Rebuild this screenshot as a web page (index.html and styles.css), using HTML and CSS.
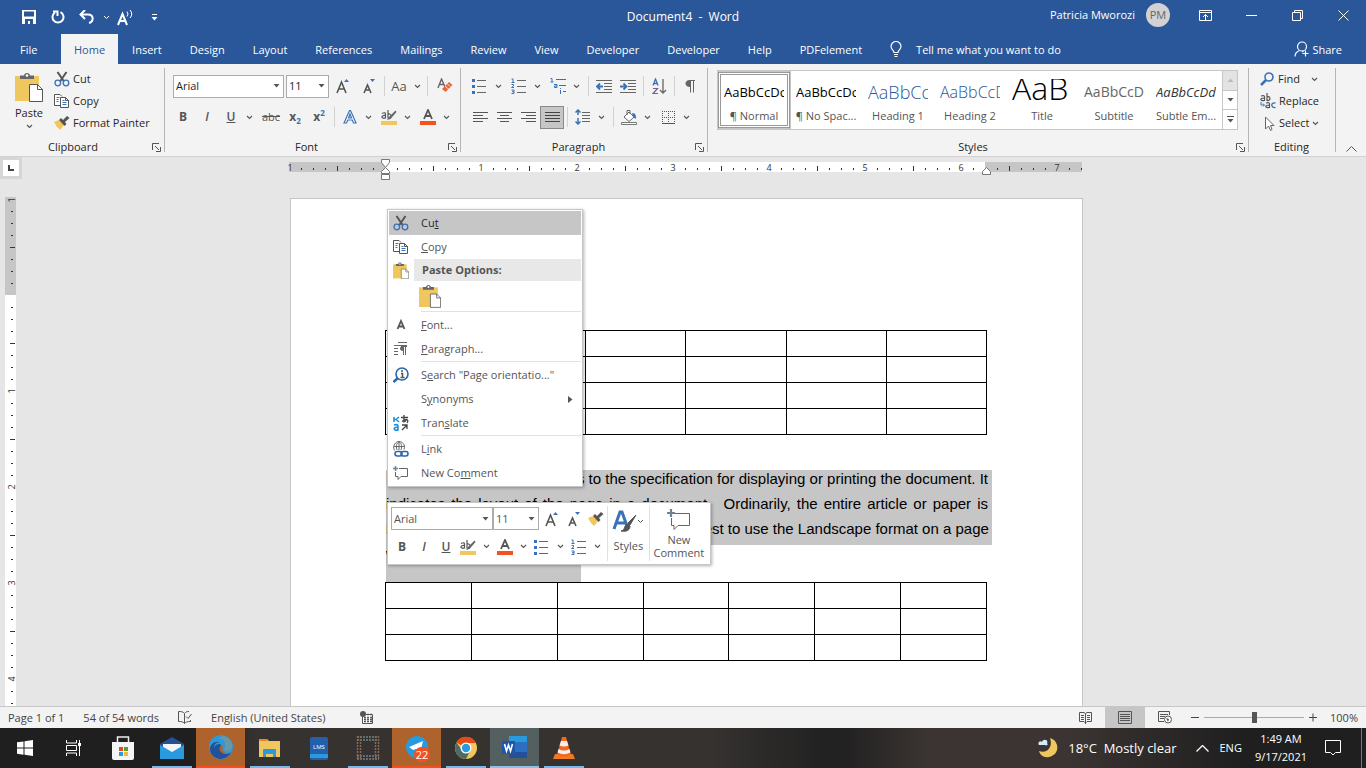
FILE: index.html
```
<!DOCTYPE html>
<html lang="en">
<head>
    <meta charset="UTF-8">
    <title>Document4 - Word</title>
    <link rel="stylesheet" href="styles.css">
</head>
<body>
    <!-- Shared icons -->
    <svg class="sprite" aria-hidden="true">
        <symbol id="caret" viewBox="0 0 7 5"><path d="M1 1l2.5 2.5L6 1" fill="none" stroke="#555" stroke-width="1.1"/></symbol>
        <symbol id="tri" viewBox="0 0 7 4"><path d="M0.5 0h6L3.5 3.5z" fill="#555"/></symbol>
        <symbol id="launcher" viewBox="0 0 9 9"><path d="M0.5 7V0.500H7M3 3l4 4M8.500 4v4.500H4" fill="none" stroke="#555"/></symbol>
        <symbol id="cut" viewBox="0 0 16 16"><path d="M3.500 1L10 10.500M12.500 1L6 10.500" stroke="#555" stroke-width="2" fill="none"/><circle cx="3.800" cy="12" r="2.800" fill="none" stroke="#3a72b8" stroke-width="1.300"/><circle cx="12" cy="12" r="2.800" fill="none" stroke="#3a72b8" stroke-width="1.300"/></symbol>
        <symbol id="copy" viewBox="0 0 16 16"><path d="M7 12.500H0.500v-11h5.500l2 2" fill="#fff" stroke="#555"/><path d="M6.500 4.500h5l3 3v7h-8z" fill="#fff" stroke="#555"/><path d="M11.500 4.500v3h3" fill="none" stroke="#555"/><path d="M2.500 4.500h3M2.500 6.500h2M2.500 8.500h2M8.500 9.500h4M8.500 11.500h4M8.500 7.500h2" stroke="#3a72b8"/></symbol>
        <symbol id="paste" viewBox="0 0 28 30"><path d="M0 4h24v25H0z" fill="#f0c75e"/><path d="M5 7V3.500h4C9 0 15 0 15 3.500h4V7z" fill="#666"/><circle cx="12" cy="3.500" r="1.300" fill="#fff"/><path d="M14.500 12.500h8l5 5v12h-13z" fill="#fff" stroke="#555"/><path d="M22.500 12.500v5h5" fill="none" stroke="#555"/></symbol>
        <symbol id="brush" viewBox="0 0 16 14"><path d="M0 6l5-2 5 5-4 5-3-3z" fill="#f0c75e"/><path d="M5 4l2-2 2 2 4-4 2.500 2L11 6l1.500 2-2 2z" fill="#555"/></symbol>
        <symbol id="growA" viewBox="0 0 16 16"><path d="M2 15L6.500 4L11 15M3.500 11h6" fill="none" stroke="#555" stroke-width="1.600"/><path d="M9 4l2.500-3L14 4z" fill="#3a72b8"/></symbol>
        <symbol id="shrinkA" viewBox="0 0 16 16"><path d="M3 15L6.500 7L10 15M4.500 12h4" fill="none" stroke="#555" stroke-width="1.600"/><path d="M9 1l2.500 3L14 1z" fill="#3a72b8"/></symbol>
        <symbol id="highlight" viewBox="0 0 16 16"><path d="M0 12h16v4H0z" fill="#f0c75e"/><path d="M1 4.500c3-1.500 3.500-.5 3.500 1V9c-5 1-4.500-3 0-2.500M7 1v8c4 1 4-5 0-4" fill="none" stroke="#555" stroke-width="1.200"/><path d="M14.500 1.500L8 8l-2 3 3.500-1 6-7z" fill="#666"/></symbol>
        <symbol id="fontColor" viewBox="0 0 16 16"><path d="M0 12h16v4H0z" fill="#f4511e"/><path d="M4 10L8 1l4 9M5.500 7h5" fill="none" stroke="#555" stroke-width="1.800"/></symbol>
        <symbol id="bullets" viewBox="0 0 16 16"><path d="M5 2.500h9M5 8.500h9M5 14.500h9" stroke="#666"/><path d="M0 1h3v3H0zM0 7h3v3H0zM0 13h3v3H0z" fill="#3a72b8"/></symbol>
        <symbol id="numbers" viewBox="0 0 16 16"><path d="M6 2.500h9M6 8.500h9M6 14.500h9" stroke="#666"/><path d="M0.500 1H2v3.500M0.500 4.500h3M0.500 6.500h2v1.500l-2 1.500h2.500M0.500 12h2.500v3.500H.5M1 13.700h2" fill="none" stroke="#3a72b8"/></symbol>
        <symbol id="comment" viewBox="0 0 24 22"><path d="M8 4.500h14.500v12H11l-4 4v-4H4.500V9" fill="none" stroke="#666"/><path d="M4 0v8M0 4h8" stroke="#6d8294" stroke-width="2.200"/></symbol>
    </svg>

    <header class="titlebar">
        <div class="quick-access">
            <button class="qa" aria-label="Save"><svg width="14" height="14"><path d="M0 0h14v14H0z" fill="#fff"/><path d="M2 1.500h10v5H2zM3 9h8v5H3z" fill="#2a579a"/><path d="M6 11h2v3H6z" fill="#fff"/></svg></button>
            <button class="qa" aria-label="Repeat"><svg width="14" height="14"><path d="M9.500 2.200A5.500 5.500 0 1 1 4 2.500M2 1.500h4.500V6" fill="none" stroke="#fff" stroke-width="2"/></svg></button>
            <button class="qa" aria-label="Undo"><svg width="16" height="14"><path d="M6 0L1.500 4.500 6 9M2 4.500h7c6 0 6 7 1 8.500" fill="none" stroke="#fff" stroke-width="2"/></svg></button>
            <button class="qa narrow" aria-label="Undo list"><svg width="7" height="5"><path d="M1 1l2.500 2.500L6 1" fill="none" stroke="#fff"/></svg></button>
            <button class="qa" aria-label="Read aloud"><svg width="17" height="17"><path d="M1 16L5.500 5 10 16M3 12h5" fill="none" stroke="#fff" stroke-width="2"/><path d="M10 2.500q2 2.500 0 5M13 1q3.500 4 0 8" fill="none" stroke="#fff"/></svg></button>
            <button class="qa" aria-label="Customize"><svg width="7" height="7"><path d="M1 .5h5" stroke="#fff"/><path d="M0.500 3h6l-3 3.500z" fill="#fff"/></svg></button>
        </div>
        <h1 class="doc-title">Document4 &nbsp;-&nbsp; Word</h1>
        <div class="window-controls">
            <span class="user">Patricia Mworozi</span>
            <span class="avatar">PM</span>
            <button class="win" aria-label="Ribbon display options"><svg width="13" height="11"><path d="M.5.5h12v10H.5zM.5 2.500h12M6.500 10V4.500M4 7l2.500-2.500L9 7" fill="none" stroke="#fff"/></svg></button>
            <button class="win" aria-label="Minimize"><svg width="11" height="11"><path d="M0 5.500h11" stroke="#fff"/></svg></button>
            <button class="win" aria-label="Restore"><svg width="11" height="11"><path d="M.5 2.500h8v8h-8zM2.500 2.500v-2h8v8h-2" fill="none" stroke="#fff"/></svg></button>
            <button class="win" aria-label="Close"><svg width="11" height="11"><path d="M.5.5l10 10M10.500.5l-10 10" stroke="#fff"/></svg></button>
        </div>
    </header>

    <nav class="tabs">
        <a href="#" class="tab file">File</a>
        <a href="#" class="tab active">Home</a>
        <a href="#" class="tab">Insert</a>
        <a href="#" class="tab">Design</a>
        <a href="#" class="tab">Layout</a>
        <a href="#" class="tab">References</a>
        <a href="#" class="tab">Mailings</a>
        <a href="#" class="tab">Review</a>
        <a href="#" class="tab">View</a>
        <a href="#" class="tab">Developer</a>
        <a href="#" class="tab">Developer</a>
        <a href="#" class="tab">Help</a>
        <a href="#" class="tab">PDFelement</a>
        <button class="tell-me"><svg width="12" height="17"><path d="M4 11.500C4 9 1 8.500 1 5.500a5 5 0 0 1 10 0C11 8.500 8 9 8 11.500zM4 13.500h4M4.500 15.500h3" fill="none" stroke="#fff" stroke-width="1.200"/></svg>Tell me what you want to do</button>
        <button class="share"><svg width="16" height="16"><circle cx="8" cy="5.500" r="4.500" fill="none" stroke="#fff" stroke-width="1.200"/><path d="M1 15.500c0-3.500 2-5 4.500-6M8 11l1.500-1M11.500 9.500v6M8.500 12.500h6" fill="none" stroke="#fff" stroke-width="1.200"/></svg>Share</button>
    </nav>

    <section class="ribbon">
        <div class="group clipboard">
            <div class="clip-body">
                <button class="paste-btn"><svg width="28" height="30"><use href="#paste"/></svg>Paste<svg class="caret"><use href="#caret"/></svg></button>
                <div class="stack">
                    <button class="cmd"><svg width="16" height="16"><use href="#cut"/></svg>Cut</button>
                    <button class="cmd"><svg width="16" height="16"><use href="#copy"/></svg>Copy</button>
                    <button class="cmd"><svg width="16" height="14"><use href="#brush"/></svg>Format Painter</button>
                </div>
            </div>
            <div class="group-name">Clipboard<svg class="launcher"><use href="#launcher"/></svg></div>
        </div>

        <div class="group font">
            <div class="rows">
                <div class="row">
                    <span class="combo face"><select aria-label="Font"><option>Arial</option></select><svg width="7" height="4"><use href="#tri"/></svg></span>
                    <span class="combo size"><select aria-label="Font size"><option>11</option></select><svg width="7" height="4"><use href="#tri"/></svg></span>
                    <button class="tool wide" aria-label="Increase font size"><svg width="16" height="16"><use href="#growA"/></svg></button>
                    <button class="tool" aria-label="Decrease font size"><svg width="16" height="16"><use href="#shrinkA"/></svg></button>
                    <i class="sep"></i>
                    <button class="tool case">Aa<svg class="caret"><use href="#caret"/></svg></button>
                    <i class="sep"></i>
                    <button class="tool wide" aria-label="Clear formatting"><svg width="16" height="16"><path d="M1 10L4.500 1 8 9M2.500 6.500h4" fill="none" stroke="#666" stroke-width="1.400"/><path d="M5 11l7-7 3.500 3-7 7z" fill="#e8663c"/><path d="M8 8l4 3.500M10 5.500l3 3" stroke="#fff" stroke-width=".8"/></svg></button>
                </div>
                <div class="row">
                    <button class="tool"><b>B</b></button>
                    <button class="tool"><em>I</em></button>
                    <button class="tool"><u>U</u></button>
                    <button class="arrow mid" aria-label="Underline style"><svg class="caret"><use href="#caret"/></svg></button>
                    <button class="tool strike">abc</button>
                    <button class="tool script">x<sub>2</sub></button>
                    <button class="tool script">x<sup>2</sup></button>
                    <i class="sep"></i>
                    <button class="tool" aria-label="Text effects"><svg width="16" height="16"><path d="M2 14L7.500 1.500h1L14 14h-2.500l-1.200-3H5.700l-1.200 3zM6.500 9h3L8 5z" fill="#fff" stroke="#3a72b8" stroke-width="1.200"/></svg></button>
                    <button class="arrow" aria-label="Text effects list"><svg class="caret"><use href="#caret"/></svg></button>
                    <button class="tool" aria-label="Highlight"><svg width="16" height="16"><use href="#highlight"/></svg></button>
                    <button class="arrow" aria-label="Highlight colors"><svg class="caret"><use href="#caret"/></svg></button>
                    <button class="tool" aria-label="Font color"><svg width="16" height="16"><use href="#fontColor"/></svg></button>
                    <button class="arrow" aria-label="Font colors"><svg class="caret"><use href="#caret"/></svg></button>
                </div>
            </div>
            <div class="group-name">Font<svg class="launcher"><use href="#launcher"/></svg></div>
        </div>

        <div class="group paragraph">
            <div class="rows">
                <div class="row">
                    <button class="tool" aria-label="Bullets"><svg width="16" height="16"><use href="#bullets"/></svg></button>
                    <button class="arrow" aria-label="Bullet library"><svg class="caret"><use href="#caret"/></svg></button>
                    <button class="tool" aria-label="Numbering"><svg width="16" height="16"><use href="#numbers"/></svg></button>
                    <button class="arrow" aria-label="Numbering library"><svg class="caret"><use href="#caret"/></svg></button>
                    <button class="tool" aria-label="Multilevel list"><svg width="16" height="16"><path d="M6 1.500h10M9 7.500h7M13 13.500h3" stroke="#666"/><path d="M0.500 0.500H2v3.500M0.500 4h3M4 6.500h3v3H4.500V8H7M10.500 12v4M10.500 10v1" fill="none" stroke="#3a72b8"/></svg></button>
                    <button class="arrow" aria-label="List styles"><svg class="caret"><use href="#caret"/></svg></button>
                    <i class="sep"></i>
                    <button class="tool" aria-label="Decrease indent"><svg width="16" height="14"><path d="M0 1.500h16M8 4.500h8M8 7.500h8M8 10.500h8M0 13.500h16" stroke="#666"/><path d="M7 7.500H1M4 4.500l-3 3 3 3" fill="none" stroke="#3a72b8" stroke-width="1.800"/></svg></button>
                    <button class="tool" aria-label="Increase indent"><svg width="16" height="14"><path d="M0 1.500h16M8 4.500h8M8 7.500h8M8 10.500h8M0 13.500h16" stroke="#666"/><path d="M0 7.500h6M3.500 4.500l3 3-3 3" fill="none" stroke="#3a72b8" stroke-width="1.800"/></svg></button>
                    <i class="sep"></i>
                    <button class="tool" aria-label="Sort"><svg width="15" height="17"><path d="M1 7.500L3.500 1 6 7.500M2 5.500h3" fill="none" stroke="#3a72b8" stroke-width="1.300"/><path d="M1 10.500h4.500l-4.500 5h5" fill="none" stroke="#7a5f8a" stroke-width="1.200"/><path d="M11 1v14M8 12l3 3 3-3" fill="none" stroke="#666" stroke-width="1.300"/></svg></button>
                    <i class="sep"></i>
                    <button class="tool" aria-label="Show marks"><svg width="10" height="13"><path d="M5 0v7C-1 7-1 0 5 0z" fill="#666"/><path d="M4 .5h6M5.500 0v12.500M8.500 0v12.500" stroke="#666"/></svg></button>
                </div>
                <div class="row">
                    <button class="tool" aria-label="Align left"><svg width="15" height="12"><path d="M0 1.500h15M0 4.500h10M0 7.500h15M0 10.500h10" stroke="#555"/></svg></button>
                    <button class="tool" aria-label="Center"><svg width="15" height="12"><path d="M0 1.500h15M3 4.500h9M0 7.500h15M3 10.500h9" stroke="#555"/></svg></button>
                    <button class="tool" aria-label="Align right"><svg width="15" height="12"><path d="M0 1.500h15M5 4.500h10M0 7.500h15M5 10.500h10" stroke="#555"/></svg></button>
                    <button class="tool pressed" aria-label="Justify"><svg width="15" height="12"><path d="M0 1.500h15M0 4.500h15M0 7.500h15M0 10.500h15" stroke="#444"/></svg></button>
                    <i class="sep"></i>
                    <button class="tool" aria-label="Line spacing"><svg width="16" height="16"><path d="M7 3.500h8M7 6.500h8M7 9.500h8M7 12.500h8" stroke="#666"/><path d="M3 1v5M.5 3.500L3 1l2.500 2.500M3 9v6M.5 12.500L3 15l2.500-2.500" fill="none" stroke="#3a72b8" stroke-width="1.500"/></svg></button>
                    <button class="arrow" aria-label="Spacing options"><svg class="caret"><use href="#caret"/></svg></button>
                    <i class="sep"></i>
                    <button class="tool" aria-label="Shading"><svg width="17" height="16"><path d="M3 8l5-5 5 5-5 4.500zM6 6V1.500h3V5" fill="#fff" stroke="#666"/><path d="M11 4c4 0 4 3 4 6l-3-2z" fill="#3a72b8"/><path d="M.5 13.500h15v2H.5z" fill="#fff" stroke="#777"/></svg></button>
                    <button class="arrow" aria-label="Shading colors"><svg class="caret"><use href="#caret"/></svg></button>
                    <button class="tool" aria-label="Borders"><svg width="13" height="13"><path d="M.5 0v13M6.500 0v13M12.500 0v13M0 .5h13M0 6.500h13" stroke="#555" stroke-dasharray="1 1"/><path d="M0 12.500h13" stroke="#555"/></svg></button>
                    <button class="arrow" aria-label="Border styles"><svg class="caret"><use href="#caret"/></svg></button>
                </div>
            </div>
            <div class="group-name">Paragraph<svg class="launcher"><use href="#launcher"/></svg></div>
        </div>

        <div class="group styles">
            <div class="gallery">
                <button class="style selected"><span class="sample">AaBbCcDc</span>¶ Normal</button>
                <button class="style"><span class="sample">AaBbCcDc</span>¶ No Spac...</button>
                <button class="style"><span class="sample h1">AaBbCc</span>Heading 1</button>
                <button class="style"><span class="sample h2">AaBbCcD</span>Heading 2</button>
                <button class="style"><span class="sample title">AaB</span>Title</button>
                <button class="style"><span class="sample subtitle">AaBbCcD</span>Subtitle</button>
                <button class="style"><span class="sample emphasis">AaBbCcDd</span>Subtle Em...</button>
                <div class="scroller">
                    <button class="off" aria-label="Previous row"><svg width="7" height="4"><path d="M.5 4h6L3.500.5z" fill="#bbb"/></svg></button>
                    <button aria-label="Next row"><svg width="7" height="4"><use href="#tri"/></svg></button>
                    <button aria-label="More styles"><svg width="7" height="7"><path d="M0 .5h7" stroke="#555"/><path d="M.5 3h6l-3 3.500z" fill="#555"/></svg></button>
                </div>
            </div>
            <div class="group-name">Styles<svg class="launcher"><use href="#launcher"/></svg></div>
        </div>

        <div class="group editing">
            <div class="stack">
                <button class="cmd"><svg width="15" height="14"><circle cx="9" cy="5" r="4" fill="none" stroke="#3a72b8" stroke-width="1.600"/><path d="M6 8l-5 5" stroke="#3a72b8" stroke-width="2.500"/></svg>Find<svg class="caret far"><use href="#caret"/></svg></button>
                <button class="cmd"><svg width="16" height="16"><path d="M1 3c3-1 3.500 0 3.500 1v3.500C-.5 8-.5 5 4.500 5M7 0v7.500c4 .5 4-4.500 0-4" fill="none" stroke="#555" stroke-width="1.200"/><path d="M1 9v3h3M3 10.500L4.500 12 3 13.500" fill="none" stroke="#3a72b8"/><path d="M6 10c3-1 3.500 0 3.500 1v3.500c-5 .5-5-2.500 0-2.500" fill="none" stroke="#555" stroke-width="1.200"/><path d="M15.500 10c-5-1-5 5 0 4.500" fill="none" stroke="#3a72b8" stroke-width="1.300"/></svg>Replace</button>
                <button class="cmd"><svg width="16" height="15"><path d="M5.500 1v12l3-3 2 4.500 1.500-1-1.500-4H14z" fill="#fff" stroke="#666"/></svg>Select<svg class="caret"><use href="#caret"/></svg></button>
            </div>
            <div class="group-name">Editing</div>
        </div>
        <button class="collapse" aria-label="Collapse the ribbon"><svg width="11" height="6"><path d="M.5 5.500l5-5 5 5" fill="none" stroke="#555"/></svg></button>
    </section>

    <main class="workspace">
        <div class="side">
            <button class="tab-stop" aria-label="Tab selector"><svg width="6" height="6"><path d="M1 0v5h5" fill="none" stroke="#444" stroke-width="2"/></svg></button>
            <svg class="v-ruler" width="11" height="509">
                <defs>
                    <pattern id="vticks" width="11" height="96" y="2" patternUnits="userSpaceOnUse"><path d="M6 12.500h2M6 24.500h2M6 36.500h2M5 48.500h5M6 60.500h2M6 72.500h2M6 84.500h2" stroke="#333"/></pattern>
                </defs>
                <path d="M0 0h11v98H0z" fill="#c6c6c6"/><path d="M0 98h11v411H0z" fill="#fff"/>
                <path d="M0 0h11v509H0z" fill="url(#vticks)"/>
                <g class="ruler-num">
                    <text transform="translate(10 3) rotate(-90)">1</text>
                    <text transform="translate(10 194) rotate(-90)">1</text>
                    <text transform="translate(10 290) rotate(-90)">2</text>
                    <text transform="translate(10 386) rotate(-90)">3</text>
                    <text transform="translate(10 482) rotate(-90)">4</text>
                </g>
            </svg>
        </div>
        <div class="canvas">
            <svg class="h-ruler" width="797" height="24">
                <defs>
                    <pattern id="hticks" width="96" height="12" x="1" y="5" patternUnits="userSpaceOnUse"><path d="M12.500 6v2M24.500 6v2M36.500 6v2M48.500 4v5M60.500 6v2M72.500 6v2M84.500 6v2" stroke="#333"/></pattern>
                </defs>
                <path d="M1 5h96v10H1zM697 5h97v10H697z" fill="#c6c6c6"/><path d="M97 5h600v10H97z" fill="#fff"/>
                <path d="M0 5h794v10H0z" fill="url(#hticks)"/>
                <g class="ruler-num">
                    <text x="2" y="14">1</text><text x="193" y="14">1</text><text x="289" y="14">2</text><text x="385" y="14">3</text>
                    <text x="481" y="14">4</text><text x="577" y="14">5</text><text x="673" y="14">6</text><text x="769" y="14">7</text>
                </g>
                <path d="M93.500 2.500h8v3l-4 5 4 4v2h-8v-2l4-4-4-5zM93.500 17.500h8v5h-8z" fill="#fff" stroke="#777"/>
                <path d="M694.500 17.500v-3l4-4 4 4v3z" fill="#fff" stroke="#777"/>
            </svg>
            <article class="page">
                <table class="grid first">
                    <tr><td></td><td></td><td></td><td></td><td></td><td></td></tr>
                    <tr><td></td><td></td><td></td><td></td><td></td><td></td></tr>
                    <tr><td></td><td></td><td></td><td></td><td></td><td></td></tr>
                    <tr><td></td><td></td><td></td><td></td><td></td><td></td></tr>
                </table>
                <div class="text">
                    <div class="line">Page orientation simply refers to the specification for displaying or printing the document. It</div>
                    <div class="line">indicates the layout of the page in a document.&nbsp; Ordinarily, the entire article or paper is</div>
                    <div class="line">in the Portrait format. However, it might be the best to use the Landscape format on a page</div>
                    <div class="line last">with a wide table.</div>
                </div>
                <table class="grid">
                    <tr><td></td><td></td><td></td><td></td><td></td><td></td><td></td></tr>
                    <tr><td></td><td></td><td></td><td></td><td></td><td></td><td></td></tr>
                    <tr><td></td><td></td><td></td><td></td><td></td><td></td><td></td></tr>
                </table>

                <!-- Right-click menu -->
                <div class="context-menu">
                    <button class="item hover"><svg width="16" height="16"><use href="#cut"/></svg><span>Cu<u>t</u></span></button>
                    <button class="item"><svg width="16" height="16"><use href="#copy"/></svg><span><u>C</u>opy</span></button>
                    <div class="item heading"><svg width="16" height="17"><use href="#paste"/></svg><b>Paste Options:</b></div>
                    <button class="item option" aria-label="Keep source formatting"><svg width="22" height="24"><use href="#paste"/></svg></button>
                    <hr>
                    <button class="item"><svg width="16" height="16"><path d="M4.500 12L8 4l3.500 8M5.500 9.500h5" fill="none" stroke="#555" stroke-width="1.800"/></svg><span><u>F</u>ont...</span></button>
                    <button class="item"><svg width="16" height="16"><path d="M5 1.500h9M1 4.500h13M1 7.500h4M1 10.500h4M1 13.500h4M10.500 5v9M12.500 5v9M8 5.500h6" stroke="#666"/><path d="M10 5v5c-4 0-4-5 0-5z" fill="#666"/></svg><span><u>P</u>aragraph...</span></button>
                    <hr>
                    <button class="item"><svg width="16" height="16"><circle cx="9" cy="7" r="6" fill="none" stroke="#2a66ad" stroke-width="1.600"/><path d="M5 11l-4.500 4" stroke="#2a66ad" stroke-width="2.500"/><path d="M9 3v2M8 6.500h1.500V10M7.500 10.500h4" fill="none" stroke="#555" stroke-width="1.500"/></svg><span>S<u>e</u>arch "Page orientatio..."</span></button>
                    <button class="item"><svg width="16" height="16"></svg><span>S<u>y</u>nonyms</span><svg class="more" width="5" height="7"><path d="M0 0v7l4.500-3.500z" fill="#555"/></svg></button>
                    <button class="item"><svg width="16" height="16"><path d="M1 2v5M1 4.500h2L6 2M3 4.500L6 7M1 10c3-1 4 0 4 1v4c-5 1-5-3 0-3" fill="none" stroke="#1e8fd8" stroke-width="1.600"/><path d="M8 2.500h7M11 0v6M14 4c-3 5-6 2-3 1s5 0 3 3M9 10h5v4M14 10l-5 5" fill="none" stroke="#444" stroke-width="1.300"/></svg><span>Tran<u>s</u>late</span></button>
                    <hr>
                    <button class="item"><svg width="16" height="16"><path d="M1.500 9.500C-1 4 3 .5 6 .5s7 3 5 8M1 5.500h10M6 1v8M4 9C2.500 4 4 2 6 1c2 1 3.500 3 2 8" fill="none" stroke="#666"/><rect x="2" y="10.500" width="7" height="4.500" rx="2.200" fill="none" stroke="#2a66ad" stroke-width="1.600"/><rect x="8" y="10.500" width="7" height="4.500" rx="2.200" fill="none" stroke="#2a66ad" stroke-width="1.600"/></svg><span>L<u>i</u>nk</span></button>
                    <button class="item"><svg width="16" height="15"><path d="M6 2.500h8.500v8H8l-3 3v-3H2.500V6" fill="none" stroke="#666"/><path d="M2.500 0v5M0 2.500h5" stroke="#6d8294" stroke-width="1.500"/></svg><span>New Co<u>m</u>ment</span></button>
                </div>

                <!-- Floating mini toolbar -->
                <div class="mini-toolbar">
                    <div class="mini-rows">
                        <div class="row">
                            <span class="combo face"><select aria-label="Selection font"><option>Arial</option></select><svg width="7" height="4"><use href="#tri"/></svg></span>
                            <span class="combo size"><select aria-label="Selection font size"><option>11</option></select><svg width="7" height="4"><use href="#tri"/></svg></span>
                            <button class="tool" aria-label="Grow font"><svg width="16" height="16"><use href="#growA"/></svg></button>
                            <button class="tool" aria-label="Shrink font"><svg width="16" height="16"><use href="#shrinkA"/></svg></button>
                            <button class="tool" aria-label="Format painter"><svg width="16" height="14"><use href="#brush"/></svg></button>
                        </div>
                        <div class="row">
                            <button class="tool"><b>B</b></button>
                            <button class="tool"><em>I</em></button>
                            <button class="tool"><u>U</u></button>
                            <button class="tool" aria-label="Highlight text"><svg width="16" height="16"><use href="#highlight"/></svg></button>
                            <button class="arrow" aria-label="Highlight list"><svg class="caret"><use href="#caret"/></svg></button>
                            <button class="tool" aria-label="Text color"><svg width="16" height="16"><use href="#fontColor"/></svg></button>
                            <button class="arrow" aria-label="Text color list"><svg class="caret"><use href="#caret"/></svg></button>
                            <button class="tool" aria-label="Bullet list"><svg width="16" height="16"><use href="#bullets"/></svg></button>
                            <button class="arrow" aria-label="Bullet list options"><svg class="caret"><use href="#caret"/></svg></button>
                            <button class="tool" aria-label="Numbered list"><svg width="16" height="16"><use href="#numbers"/></svg></button>
                            <button class="arrow" aria-label="Numbered list options"><svg class="caret"><use href="#caret"/></svg></button>
                        </div>
                    </div>
                    <button class="big"><svg width="32" height="24"><path d="M2 20L8 3h2l5 14M4 14h10" fill="none" stroke="#3a72b8" stroke-width="3"/><path d="M24 6l-8 8 2 2zM16 15c-5 1-2 6-7 7 6 1 9-1 9-5z" fill="#555" stroke="#555"/><path d="M26 11l2.500 2.500L31 11" fill="none" stroke="#555"/></svg>Styles</button>
                    <button class="big new"><svg width="24" height="22"><use href="#comment"/></svg>New<br>Comment</button>
                </div>
            </article>
        </div>
    </main>

    <footer class="statusbar">
        <span>Page 1 of 1</span>
        <span>54 of 54 words</span>
        <svg width="14" height="13"><path d="M6.500 2.500C5 .5 3 .5.5.500v10c2.500 0 4.500 0 6 2V2.500c1-1.500 2-2 4.500-2M6.500 12.500c1-1.500 3-2 6-2V9M8 5.500l2 2L13.500 3" fill="none" stroke="#555"/></svg>
        <span>English (United States)</span>
        <svg class="macro" width="13" height="13"><path d="M2.500 4v8.500h10v-9H6" fill="#fff" stroke="#555"/><path d="M7 3.500h6M4 6.500h8M4 8.500h8M4 10.500h8" stroke="#555" stroke-width="1.300" stroke-dasharray="2 1"/><circle cx="3" cy="3" r="3" fill="#555"/></svg>
        <div class="views">
            <button aria-label="Read mode"><svg width="13" height="12"><path d="M6.500 1.500L5 .5H.5v9H5l1.500 1.500L8 9.500h4.500v-9H8zV12M2 3.500h3M2 5.500h3M2 7.500h3M8 3.500h3M8 5.500h3M8 7.500h3" fill="none" stroke="#555"/></svg></button>
            <button class="on" aria-label="Print layout"><svg width="14" height="13"><path d="M.5.5h13v12H.5zM2 3.500h10M2 5.500h10M2 7.500h10M2 9.500h10" fill="none" stroke="#555"/></svg></button>
            <button aria-label="Web layout"><svg width="14" height="13"><path d="M6 10.500H.5V.5h11V4M2 3.500h8M2 5.500h5M2 7.500h4" fill="none" stroke="#555"/><circle cx="10" cy="8.500" r="3.500" fill="#fff" stroke="#555"/><path d="M8 7l3 1-1 3z" fill="#555"/></svg></button>
        </div>
        <div class="zoom">
            <button aria-label="Zoom out"><svg width="8" height="9"><path d="M0 4.500h8" stroke="#444"/></svg></button>
            <input type="range" min="0" max="100" value="50" aria-label="Zoom">
            <button aria-label="Zoom in"><svg width="8" height="9"><path d="M0 4.500h8M4 .5v8" stroke="#444"/></svg></button>
        </div>
        <span class="percent">100%</span>
    </footer>

    <nav class="taskbar">
        <button class="app" aria-label="Start"><svg width="16" height="16"><path d="M0 2.300L6.500 1.400v6.100H0zM7.500 1.200L16 0v7.500H7.500zM0 8.500h6.500v6.200L0 13.700zM7.500 8.500H16V16l-8.500-1.200z" fill="#fff"/></svg></button>
        <button class="app" aria-label="Task view"><svg width="16" height="16"><path d="M.5 0v3h10V0M.5 5.500h10v5H.5zM.5 16v-3h10v3M13.500 0v16" fill="none" stroke="#fff"/><path d="M12 3h3v3h-3z" fill="#fff"/></svg></button>
        <button class="app" aria-label="Store"><svg width="24" height="24"><path d="M6.500 7V1h11v6" fill="none" stroke="#eee" stroke-width="1.500"/><path d="M1 6h22v16q0 2-2 2H3q-2 0-2-2z" fill="#f5f5f5"/><path d="M8 11h4v4H8z" fill="#e64a19"/><path d="M13 11h4v4h-4z" fill="#5a9e30"/><path d="M8 16h4v4H8z" fill="#2a9ade"/><path d="M13 16h4v4h-4z" fill="#f0b93a"/></svg></button>
        <button class="app open" aria-label="Mail"><svg width="24" height="24"><path d="M0 8L12 1l12 7v5H0z" fill="#24509a"/><path d="M3 8h18v8H3z" fill="#f5f5f5"/><path d="M0 9l12 7 12-7v14H0z" fill="#2a9ade"/></svg></button>
        <button class="app alert" aria-label="Edge"><svg width="24" height="24"><circle cx="12" cy="12" r="12" fill="#2a9ade"/><path d="M14 1c9 1 13 13 5 15-4 0-5-1-3-4C17 7 14 3 9 4z" fill="#6d96a4"/><path d="M3 9c4-4 10-2 9 3-2 5 4 10 10 5-2 5-7 7-11 7C3 23-2 15 3 9z" fill="#24509a"/><path d="M14 10c-3-4-9-3-9 3 1-3 3-4 5-4z" fill="#2a9ade"/><path d="M11 11c-2 6 3 9 9 7-5 1-8-3-6-7z" fill="#ad632b"/></svg></button>
        <button class="app open" aria-label="File Explorer"><svg width="22" height="20"><path d="M0 1h8l2 2h11v16H0z" fill="#f0c75e"/><path d="M0 1h8l1 2H0z" fill="#e8882a"/><path d="M4 12q0-1 1-1h11q1 0 1 1v7h-3v-3H7v3H4z" fill="#2a9ade"/></svg></button>
        <button class="app" aria-label="LMS"><svg width="18" height="23"><rect width="18" height="23" rx="2" fill="#245fae"/><path d="M0 17h18v4H0z" fill="#2a9ade"/><text x="3" y="12" class="lms">LMS</text></svg></button>
        <button class="app open" aria-label="Snip"><svg width="24" height="24"><path d="M1 1h22M1 4h22M1 20h22M1 23h22" stroke="#70818b" stroke-width="1.500" stroke-dasharray="2 1"/><path d="M1.500 0v24M4.500 0v24M19.500 0v24M22.500 0v24" stroke="#8a6a50" stroke-width="1.500" stroke-dasharray="2 1"/></svg></button>
        <button class="app alert" aria-label="Telegram"><svg width="24" height="24"><circle cx="12" cy="12" r="11" fill="#2a9ade"/><path d="M4 12l14-6-3 12-4-4-3 1z" fill="#fff"/></svg><span class="badge">22</span></button>
        <button class="app open" aria-label="Chrome"><svg width="24" height="24"><circle cx="12" cy="12" r="11" fill="#f0c75e"/><path d="M12 12L2.500 6.500A11 11 0 0 1 22 7H12z" fill="#e64a19"/><path d="M2.500 6.500A11 11 0 0 0 12 23l4-8-8-1z" fill="#4c6b62"/><circle cx="12" cy="12" r="5.500" fill="#fff"/><circle cx="12" cy="12" r="4.200" fill="#2a9ade"/></svg></button>
        <button class="app current" aria-label="Word"><svg width="26" height="24"><path d="M7 1h18v22H7z" fill="#2a6fc0"/><path d="M7 1h18v6H7z" fill="#2a9ade"/><path d="M7 17h18v6H7z" fill="#24509a"/><path d="M0 6h13v13H0z" fill="#1f57a8"/><path d="M2.500 9l2 7 2-6 2 6 2-7" fill="none" stroke="#fff" stroke-width="1.600"/></svg></button>
        <button class="app open" aria-label="VLC"><svg width="22" height="24"><path d="M2 18h18l2 5H0z" fill="#f07a1e"/><path d="M9 1h4l5 18q-7 4-14 0z" fill="#f4681e"/><path d="M8 5h6l1.500 4.500q-4.500 2-9 0zM5.500 13q5.500 3 11 0l1 3.500q-6.500 3.500-13 0z" fill="#eee"/></svg></button>

        <div class="tray">
            <svg width="20" height="20"><path d="M12 0c10 3 10 17-1 19-5 1-9-2-10-6 9 3 14-5 11-13z" fill="#f0c75e"/><path d="M1 7c-2-3 2-5 3-3 1-4 7-2 5 1 2 2-1 3-2 2H1z" fill="#d5ecf8"/></svg>
            <span class="weather">18°C &nbsp;Mostly clear</span>
            <button aria-label="Hidden icons"><svg width="13" height="7"><path d="M.5 6.500l6-6 6 6" fill="none" stroke="#fff" stroke-width="1.300"/></svg></button>
            <span>ENG</span>
            <time class="clock">1:49 AM<br>9/17/2021</time>
            <button class="notify" aria-label="Notifications"><svg width="16" height="16"><path d="M.5.5h15v12h-5L8 15l-2.500-2.500h-5z" fill="none" stroke="#fff"/></svg></button>
        </div>
    </nav>
</body>
</html>
```
FILE: styles.css
```
* {
    box-sizing: border-box;
}
body {
    margin: 0;
    height: 100vh;
    display: flex;
    flex-direction: column;
    overflow: hidden;
    font-family: "Open Sans", "Noto Sans", sans-serif;
    font-size: 11px;
    line-height: 16px;
    color: #262626;
}
button, select {
    font: inherit;
    color: inherit;
    background: none;
    border: none;
    padding: 0;
    margin: 0;
}
svg {
    display: block;
    flex: none;
}
.sprite {
    position: absolute;
    width: 0;
    height: 0;
}
.caret {
    width: 7px;
    height: 5px;
}

/* Title bar */
.titlebar {
    display: grid;
    grid-template-columns: 1fr auto 1fr;
    align-items: center;
    height: 34px;
    background: #2a579a;
    color: #fff;
}
.quick-access {
    display: flex;
    align-items: center;
    padding-left: 14px;
}
.qa {
    width: 29px;
    height: 30px;
    display: flex;
    align-items: center;
    justify-content: center;
}
.qa.narrow {
    width: 10px;
}
.doc-title {
    margin: 0;
    font-size: 12px;
    font-weight: normal;
}
.window-controls {
    display: flex;
    align-items: center;
    justify-content: flex-end;
    height: 30px;
    align-self: start;
}
.user {
    margin-right: 11px;
}
.avatar {
    width: 24px;
    height: 24px;
    margin-right: 12px;
    border-radius: 50%;
    background: #d2d2d2;
    color: #666;
    line-height: 24px;
    text-align: center;
}
.win {
    width: 46px;
    height: 30px;
    display: flex;
    align-items: center;
    justify-content: center;
}

/* Tabs */
.tabs {
    display: flex;
    height: 30px;
    background: #2a579a;
    color: #fff;
    line-height: 31px;
}
.tab {
    padding: 0 14px;
    color: #fff;
    text-decoration: none;
}
.tab.file {
    width: 61px;
    padding: 0 20px;
}
.tab.active {
    padding: 0 13px;
    background: #f3f3f3;
    color: #2a579a;
}
.tell-me, .share {
    display: flex;
    align-items: center;
    gap: 14px;
    margin-left: 14px;
}
.share {
    gap: 2px;
    margin-left: auto;
    margin-right: 24px;
}

/* Ribbon */
.ribbon {
    display: flex;
    height: 93px;
    padding: 4px 0;
    background: #f3f3f3;
    border-bottom: 1px solid #d2d2d2;
    color: #262626;
}
.group {
    display: flex;
    flex: none;
    flex-direction: column;
    justify-content: space-between;
    border-right: 1px solid #b5b5b5;
}
.clipboard {
    width: 165px;
}
.font {
    width: 296px;
    padding-left: 6px;
}
.paragraph {
    width: 247px;
    padding-left: 7px;
}
.styles {
    flex: 1;
    min-width: 0;
    padding-left: 8px;
}
.editing {
    width: 87px;
    padding-left: 11px;
}
.group-name {
    display: flex;
    align-items: center;
    justify-content: center;
    height: 10px;
    padding-right: 18px;
    position: relative;
}
.editing .group-name {
    padding-right: 12px;
}
.launcher {
    position: absolute;
    right: 3px;
    top: 1px;
    width: 9px;
    height: 9px;
}
.clip-body {
    display: flex;
    gap: 6px;
}
.paste-btn {
    display: flex;
    flex-direction: column;
    align-items: center;
    gap: 3px;
    width: 48px;
    padding: 4px 0 0 10px;
}
.stack {
    display: flex;
    flex-direction: column;
}
.cmd {
    display: flex;
    align-items: center;
    gap: 3px;
    height: 22px;
}
.cmd .far {
    margin-left: 8px;
}
.rows {
    display: flex;
    flex-direction: column;
    gap: 7px;
    padding-top: 6px;
}
.row {
    display: flex;
    align-items: center;
    height: 24px;
}
.combo {
    display: flex;
    align-items: center;
    height: 23px;
    padding: 0 3px 0 2px;
    background: #fff;
    border: 1px solid #ababab;
}
.combo select {
    flex: 1;
    appearance: none;
    outline: none;
}
.font .face {
    width: 111px;
    margin: 0 2px;
}
.font .size {
    width: 43px;
}
.tool {
    display: flex;
    align-items: center;
    justify-content: center;
    width: 24px;
    height: 24px;
    color: #555;
    font-size: 12px;
}
.tool.wide {
    width: 28px;
}
.tool.case {
    width: 36px;
    gap: 7px;
    font-size: 13px;
}
.tool.pressed {
    height: 23px;
    background: #c6c6c6;
    border: 1px solid #8a8a8a;
}
.tool.strike {
    font-size: 11px;
    text-decoration: line-through;
}
.tool em, .tool u {
    font-weight: 600;
}
.tool.script {
    font-weight: 700;
}
.tool sub, .tool sup {
    font-size: 8px;
    line-height: 8px;
    color: #3a72b8;
}
.tool sub {
    padding-top: 8px;
}
.tool sup {
    padding-bottom: 8px;
}
.arrow {
    display: flex;
    align-items: center;
    justify-content: center;
    width: 12px;
    height: 24px;
    margin-right: 3px;
}
.arrow.mid {
    width: 13px;
}
.sep {
    width: 1px;
    height: 20px;
    margin: 0 3px;
    background: #d2d2d2;
}

/* Styles gallery */
.gallery {
    display: flex;
    height: 60px;
    margin: 2px 10px 0 1px;
    background: #fff;
    border: 1px solid #c6c6c6;
}
.style {
    display: flex;
    flex-direction: column;
    align-items: center;
    gap: 3px;
    flex: 1;
    min-width: 0;
    padding: 5px 4px 0;
    color: #555;
    white-space: nowrap;
    margin: 1px 0;
    border: 2px solid transparent;
}
.style.selected {
    border: 3px double #999;
    outline: 1px solid #c6c6c6;
    padding: 4px 3px 0;
}
.sample {
    display: block;
    width: 100%;
    height: 26px;
    overflow: hidden;
    text-align: left;
    line-height: 26px;
    font-size: 13px;
    color: #000;
}
.sample.h1 {
    font-size: 18px;
    font-weight: 300;
    color: #2a579a;
}
.sample.h2 {
    font-size: 16px;
    font-weight: 300;
    color: #2a579a;
}
.sample.title {
    font-size: 32px;
    font-weight: 300;
    line-height: 18px;
}
.sample.subtitle {
    font-size: 14px;
    color: #666;
}
.sample.emphasis {
    font-style: italic;
    color: #333;
}
.scroller {
    display: flex;
    flex-direction: column;
    width: 15px;
    border-left: 1px solid #c6c6c6;
}
.scroller button {
    flex: 1;
    display: flex;
    align-items: center;
    justify-content: center;
    border-top: 1px solid #c6c6c6;
}
.scroller .off {
    border-top: none;
    background: #e3e3e3;
}
.collapse {
    width: 30px;
    display: flex;
    align-items: flex-end;
    justify-content: center;
}

/* Document area */
.workspace {
    flex: 1;
    display: flex;
    min-height: 0;
    background: #e6e6e6;
}
.side {
    width: 22px;
    margin-right: -15px;
}
.tab-stop {
    display: flex;
    align-items: center;
    justify-content: center;
    width: 22px;
    height: 22px;
    margin-bottom: 18px;
    background: #fff;
    border: 3px solid #d6d6d6;
}
.v-ruler {
    margin-left: 5px;
    overflow: visible;
}
.h-ruler {
    margin-bottom: 17px;
    overflow: visible;
}
.ruler-num {
    font-size: 9px;
    fill: #333;
    text-anchor: middle;
}
.canvas {
    flex: 1;
    display: flex;
    flex-direction: column;
    align-items: center;
}
.page {
    position: relative;
    flex: 1;
    width: 793px;
    padding: 131px 95px 0;
    background: #fff;
    border: 1px solid #c6c6c6;
    border-bottom: none;
}
.grid {
    width: 602px;
    margin-left: -1px;
    border-collapse: collapse;
    table-layout: fixed;
}
.grid.first {
    margin-bottom: 35px;
}
.grid td {
    height: 26px;
    padding: 0;
    border: 1px solid #000;
}
.text {
    margin-right: -5px;
    font-family: "Liberation Sans", Arial, sans-serif;
    font-size: 15px;
    color: #000;
}
.line {
    height: 25px;
    padding-right: 4px;
    line-height: 18px;
    background: #c6c6c6;
    text-align-last: justify;
    white-space: nowrap;
}
.line.last {
    width: 195px;
    height: 37px;
    text-align-last: left;
}

/* Context menu */
.context-menu {
    position: absolute;
    left: 96px;
    top: 10px;
    width: 196px;
    padding: 1px;
    background: #fff;
    border: 1px solid #c6c6c6;
    box-shadow: 1px 1px 3px rgba(0, 0, 0, 0.3);
}
.item {
    display: flex;
    align-items: center;
    gap: 12px;
    width: 100%;
    height: 24px;
    padding-left: 4px;
    color: #555;
}
.item.hover {
    background: #c6c6c6;
    color: #262626;
}
.item.heading {
    gap: 5px;
    height: 22px;
}
.item.heading b {
    flex: 1;
    padding-left: 8px;
    line-height: 22px;
    background: #e8e8e8;
}
.item.option {
    height: 30px;
    padding-left: 30px;
}
.more {
    margin-left: auto;
    margin-right: 8px;
}
.context-menu hr {
    height: 1px;
    margin: 0 0 1px 32px;
    border: none;
    background: #e1e1e1;
}

/* Mini toolbar */
.mini-toolbar {
    position: absolute;
    left: 96px;
    top: 303px;
    display: flex;
    width: 324px;
    height: 63px;
    padding: 3px 2px;
    background: #fff;
    border: 1px solid #c6c6c6;
    box-shadow: 1px 1px 3px rgba(0, 0, 0, 0.3);
    color: #555;
}
.mini-rows {
    flex: 1;
    display: flex;
    flex-direction: column;
    gap: 3px;
}
.mini-toolbar .row {
    height: 25px;
    padding-left: 1px;
}
.mini-toolbar .face {
    width: 102px;
}
.mini-toolbar .size {
    width: 46px;
    margin-right: 2px;
}
.mini-toolbar .tool {
    width: 22px;
}
.mini-toolbar .arrow {
    width: 15px;
    margin: 0;
}
.big {
    display: flex;
    flex-direction: column;
    align-items: center;
    gap: 6px;
    width: 43px;
    padding-top: 3px;
    border-left: 1px solid #e1e1e1;
    line-height: 13px;
}
.big.new {
    width: 61px;
    gap: 2px;
}

/* Status bar */
.statusbar {
    display: flex;
    align-items: center;
    gap: 19px;
    height: 22px;
    padding: 0 8px;
    background: #f3f3f3;
    border-top: 1px solid #c6c6c6;
    color: #444;
}
.macro {
    margin-left: 16px;
}
.views {
    display: flex;
    align-self: stretch;
    margin-left: auto;
}
.views button {
    display: flex;
    align-items: center;
    justify-content: center;
    width: 40px;
}
.views .on {
    background: #c6c6c6;
}
.zoom {
    display: flex;
    align-items: center;
    gap: 5px;
    margin-left: -13px;
    margin-right: -6px;
}
.zoom input {
    appearance: none;
    width: 100px;
    height: 11px;
    margin: 0;
    background: linear-gradient(#aaa, #aaa) center / 100% 1px no-repeat;
}
.zoom input::-webkit-slider-thumb {
    appearance: none;
    width: 5px;
    height: 11px;
    background: #555;
}

/* Taskbar */
.taskbar {
    display: flex;
    height: 40px;
    padding-right: 4px;
    background: linear-gradient(90deg, #1f1f1f 0, #1f1f1f 14%, #353230 19%, #353230 52%, #232222 60%, #232222 62%, #3b3432 68%, #3b3432 78%, #1f1f1f 91%);
    color: #fff;
}
.app {
    position: relative;
    display: flex;
    align-items: center;
    justify-content: center;
    width: 49px;
}
.open {
    background: linear-gradient(#76b9ed, #76b9ed) bottom / 40px 2px no-repeat;
}
.alert {
    background: #ad632b;
    border-bottom: 2px solid #f4511e;
}
.current {
    background: #54605f;
    border-bottom: 2px solid #8fc0ea;
}
.lms {
    fill: #fff;
    font-size: 6px;
}
.badge {
    position: absolute;
    left: 22px;
    top: 19px;
    width: 16px;
    height: 15px;
    border-radius: 8px;
    background: #f4511e;
    font-size: 11px;
    line-height: 15px;
}
.tray {
    display: flex;
    align-items: center;
    gap: 10px;
    margin-left: auto;
    padding-right: 20px;
    border-right: 1px solid #777;
}
.weather {
    font-size: 13px;
    margin-right: 10px;
}
.clock {
    text-align: center;
    line-height: 18px;
    margin: 0 6px 0 3px;
}
.notify {
    padding-left: 2px;
}
```
